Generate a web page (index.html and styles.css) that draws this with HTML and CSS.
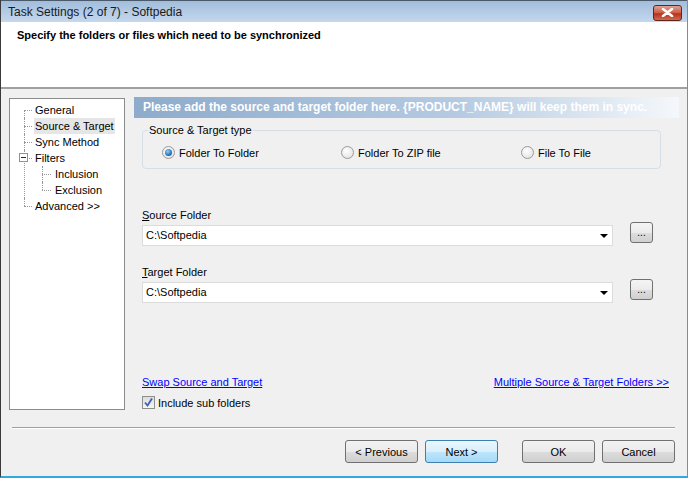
FILE: index.html
```html
<!DOCTYPE html>
<html lang="en">
<head>
  <meta charset="UTF-8">
  <title>Task Settings (2 of 7) - Softpedia</title>
  <link rel="stylesheet" href="styles.css">
</head>
<body>
  <div class="window">
    <div class="titlebar">
      <span class="title">Task Settings (2 of 7) - Softpedia</span>
      <span class="close">
        <svg width="15" height="9" viewBox="0 0 15 9"><path d="M3 1 L12 8 M12 1 L3 8" stroke="#fff" stroke-width="2.6" stroke-linecap="round"/></svg>
      </span>
    </div>

    <div class="header">
      <p>Specify the folders or files which need to be synchronized</p>
    </div>

    <div class="main">
      <div class="treebox">
        <ul class="tree">
          <li><span>General</span></li>
          <li><span class="selected">Source &amp; Target</span></li>
          <li><span>Sync Method</span></li>
          <li class="open">
            <i class="toggle"></i><span>Filters</span>
            <ul>
              <li><span>Inclusion</span></li>
              <li><span>Exclusion</span></li>
            </ul>
          </li>
          <li class="last"><span>Advanced &gt;&gt;</span></li>
        </ul>
      </div>

      <div class="panel">
        <div class="banner">Please add the source and target folder here. {PRODUCT_NAME} will keep them in sync.</div>

        <fieldset class="typebox">
          <legend>Source &amp; Target type</legend>
          <div class="radios">
            <label class="radio"><i class="dot on"></i>Folder To Folder</label>
            <label class="radio"><i class="dot"></i>Folder To ZIP file</label>
            <label class="radio"><i class="dot"></i>File To File</label>
          </div>
        </fieldset>

        <div class="field first">
          <div class="label"><u>S</u>ource Folder</div>
          <div class="row">
            <div class="combo">C:\Softpedia<i class="arrow"></i></div>
            <button class="browse">...</button>
          </div>
        </div>

        <div class="field">
          <div class="label"><u>T</u>arget Folder</div>
          <div class="row">
            <div class="combo">C:\Softpedia<i class="arrow"></i></div>
            <button class="browse">...</button>
          </div>
        </div>

        <div class="links">
          <a href="#">Swap Source and Target</a>
          <a href="#">Multiple Source &amp; Target Folders &gt;&gt;</a>
        </div>
        <label class="check"><i class="box">
          <svg width="11" height="11" viewBox="0 0 11 11"><path d="M2 5.5 L4.5 8.5 L9 1.5" stroke="#3a5fb8" stroke-width="1.8" fill="none"/></svg>
        </i>Include sub folders</label>
      </div>
    </div>

    <div class="footer">
      <div class="sep"></div>
      <div class="buttons">
        <button class="btn">&lt; Previous</button>
        <button class="btn focus">Next &gt;</button>
        <button class="btn gap">OK</button>
        <button class="btn">Cancel</button>
      </div>
    </div>
  </div>
</body>
</html>
```

FILE: styles.css
```css
body {
  margin: 0;
  font-family: "Liberation Sans", Arial, sans-serif;
  font-size: 11px;
  color: #000;
  background: #f0f0f0;
}
.window {
  width: 686px;
  height: 476px;
  background: #f0f0f0;
  border-left: 1px solid #3a3a3a;
  border-right: 2px solid #31a8e2;
  border-bottom: 2px solid #31a8e2;
  display: flex;
  flex-direction: column;
  overflow: hidden;
}
.titlebar {
  height: 22px;
  display: flex;
  align-items: center;
  justify-content: space-between;
  padding: 0 5px 0 7px;
  background: linear-gradient(#a2bddb, #c4d8ee);
  border-top: 1px solid #4b5a6b;
  box-sizing: border-box;
}
.title {
  font-size: 12px;
  color: #1a1a1a;
}
.close {
  width: 27px;
  height: 14px;
  margin-top: 2px;
  border: 1px solid #5e2820;
  border-radius: 3px;
  background: linear-gradient(#e0a393, #cc5a45 50%, #b7321c 55%, #d06a50);
  display: flex;
  align-items: center;
  justify-content: center;
}
.header {
  height: 65px;
  background: #fff;
  border-bottom: 2px solid #a0a0a0;
}
.header p {
  margin: 7px 0 0 16px;
  font-weight: bold;
  font-size: 11px;
}
.main {
  display: flex;
  padding: 9px 8px 0 8px;
  height: 312px;
}
.treebox {
  width: 114px;
  height: 310px;
  background: #fff;
  border: 1px solid #8c8c8c;
  flex: none;
}
.tree, .tree ul {
  list-style: none;
  margin: 0;
  padding: 0;
}
.tree {
  padding: 3px 0 0 14px;
}
.tree li {
  position: relative;
  padding-left: 10px;
  line-height: 16px;
}
.tree li::before {
  content: "";
  position: absolute;
  left: 0;
  top: 8px;
  width: 8px;
  border-top: 1px dotted #999;
}
.tree li::after {
  content: "";
  position: absolute;
  left: 0;
  top: 0;
  height: 16px;
  border-left: 1px dotted #999;
}
.tree > li:first-child::after {
  top: 8px;
  height: 8px;
}
.tree li.open::after {
  height: 100%;
}
.tree li.last::after,
.tree ul li:last-child::after {
  height: 8px;
}
.tree ul {
  margin-left: 8px;
}
.tree ul li {
  padding-left: 12px;
}
.tree ul li::before {
  width: 9px;
}
.tree span {
  padding: 0 1px;
  display: inline-block;
}
.tree span.selected {
  background: #e6e6e6;
  width: 79px;
}
.toggle {
  position: absolute;
  left: -5px;
  top: 3px;
  width: 9px;
  height: 9px;
  box-sizing: border-box;
  border: 1px solid #919191;
  background: #fff;
  z-index: 1;
}
.toggle::after {
  content: "";
  position: absolute;
  left: 1px;
  top: 3px;
  width: 5px;
  border-top: 1px solid #2a2a2a;
}
.tree ul li::after {
  left: 0;
}
.panel {
  flex: 1;
  margin-left: 9px;
  margin-top: -1px;
}
.banner {
  height: 21px;
  line-height: 21px;
  padding-left: 9px;
  color: #fff;
  font-weight: bold;
  font-size: 12px;
  white-space: nowrap;
  overflow: hidden;
  background: linear-gradient(90deg, #8eabcb, #b6cbe2 60%, #f5f8fb);
}
.typebox {
  margin: 6px 18px 0 8px;
  padding: 2px 0 0 0;
  height: 41px;
  border: 1px solid #d5dfe5;
  border-radius: 4px;
}
.typebox legend {
  padding: 0 1px;
  margin-left: 5px;
}
.radios {
  display: flex;
  padding: 8px 0 0 19px;
}
.radio {
  display: flex;
  align-items: center;
  gap: 4px;
}
.radio:nth-child(1) { width: 179px; }
.radio:nth-child(2) { width: 180px; }
.dot {
  width: 11px;
  height: 11px;
  border: 1px solid #9a9a9a;
  border-radius: 50%;
  background: radial-gradient(circle at 40% 35%, #fff, #dcdcdc);
  position: relative;
}
.dot.on::after {
  content: "";
  position: absolute;
  left: 2px;
  top: 2px;
  width: 7px;
  height: 7px;
  border-radius: 50%;
  background: radial-gradient(circle at 40% 35%, #8fd0ff, #1a62b0 70%);
}
.field {
  margin: 19px 0 0 8px;
}
.field.first {
  margin-top: 39px;
}
.label {
  line-height: 14px;
}
.row {
  display: flex;
  align-items: flex-start;
  margin-top: 3px;
}
.combo {
  width: 466px;
  height: 19px;
  line-height: 19px;
  padding-left: 3px;
  background: #fff;
  border: 1px solid #dcdcdc;
  position: relative;
}
.arrow {
  position: absolute;
  right: 4px;
  top: 8px;
  border-left: 4px solid transparent;
  border-right: 4px solid transparent;
  border-top: 4px solid #000;
}
.browse {
  margin: -3px 0 0 17px;
  width: 23px;
  height: 21px;
  border: 1px solid #707070;
  border-radius: 3px;
  background: linear-gradient(#f4f4f4, #ebebeb 50%, #dcdcdc 55%, #d0d0d0);
  font-family: inherit;
  font-size: 10px;
  padding: 0;
  line-height: 14px;
}
.links {
  display: flex;
  justify-content: space-between;
  margin: 72px 10px 0 8px;
  line-height: 14px;
}
.links a {
  color: #0000ff;
}
.check {
  display: flex;
  align-items: center;
  gap: 3px;
  margin: 7px 0 0 8px;
}
.box {
  width: 11px;
  height: 11px;
  border: 1px solid #8e8f8f;
  background: linear-gradient(#dcdcdc, #f6f6f6);
  display: flex;
}
.footer {
  padding: 17px 12px 0 11px;
}
.sep {
  border-top: 1px solid #a0a0a0;
  border-bottom: 1px solid #fff;
}
.buttons {
  display: flex;
  justify-content: flex-end;
  gap: 7px;
  margin-top: 11px;
}
.btn {
  width: 73px;
  height: 23px;
  border: 1px solid #707070;
  border-radius: 3px;
  background: linear-gradient(#f2f2f2, #ebebeb 50%, #dddddd 51%, #cfcfcf);
  font-family: inherit;
  font-size: 11px;
  padding: 0;
}
.btn.focus {
  border-color: #3c7fb1;
  background: linear-gradient(#eaf6fd, #d9f0fc 50%, #bee6fd 51%, #a7d9f5);
}
.btn.gap {
  margin-left: 17px;
}
```
